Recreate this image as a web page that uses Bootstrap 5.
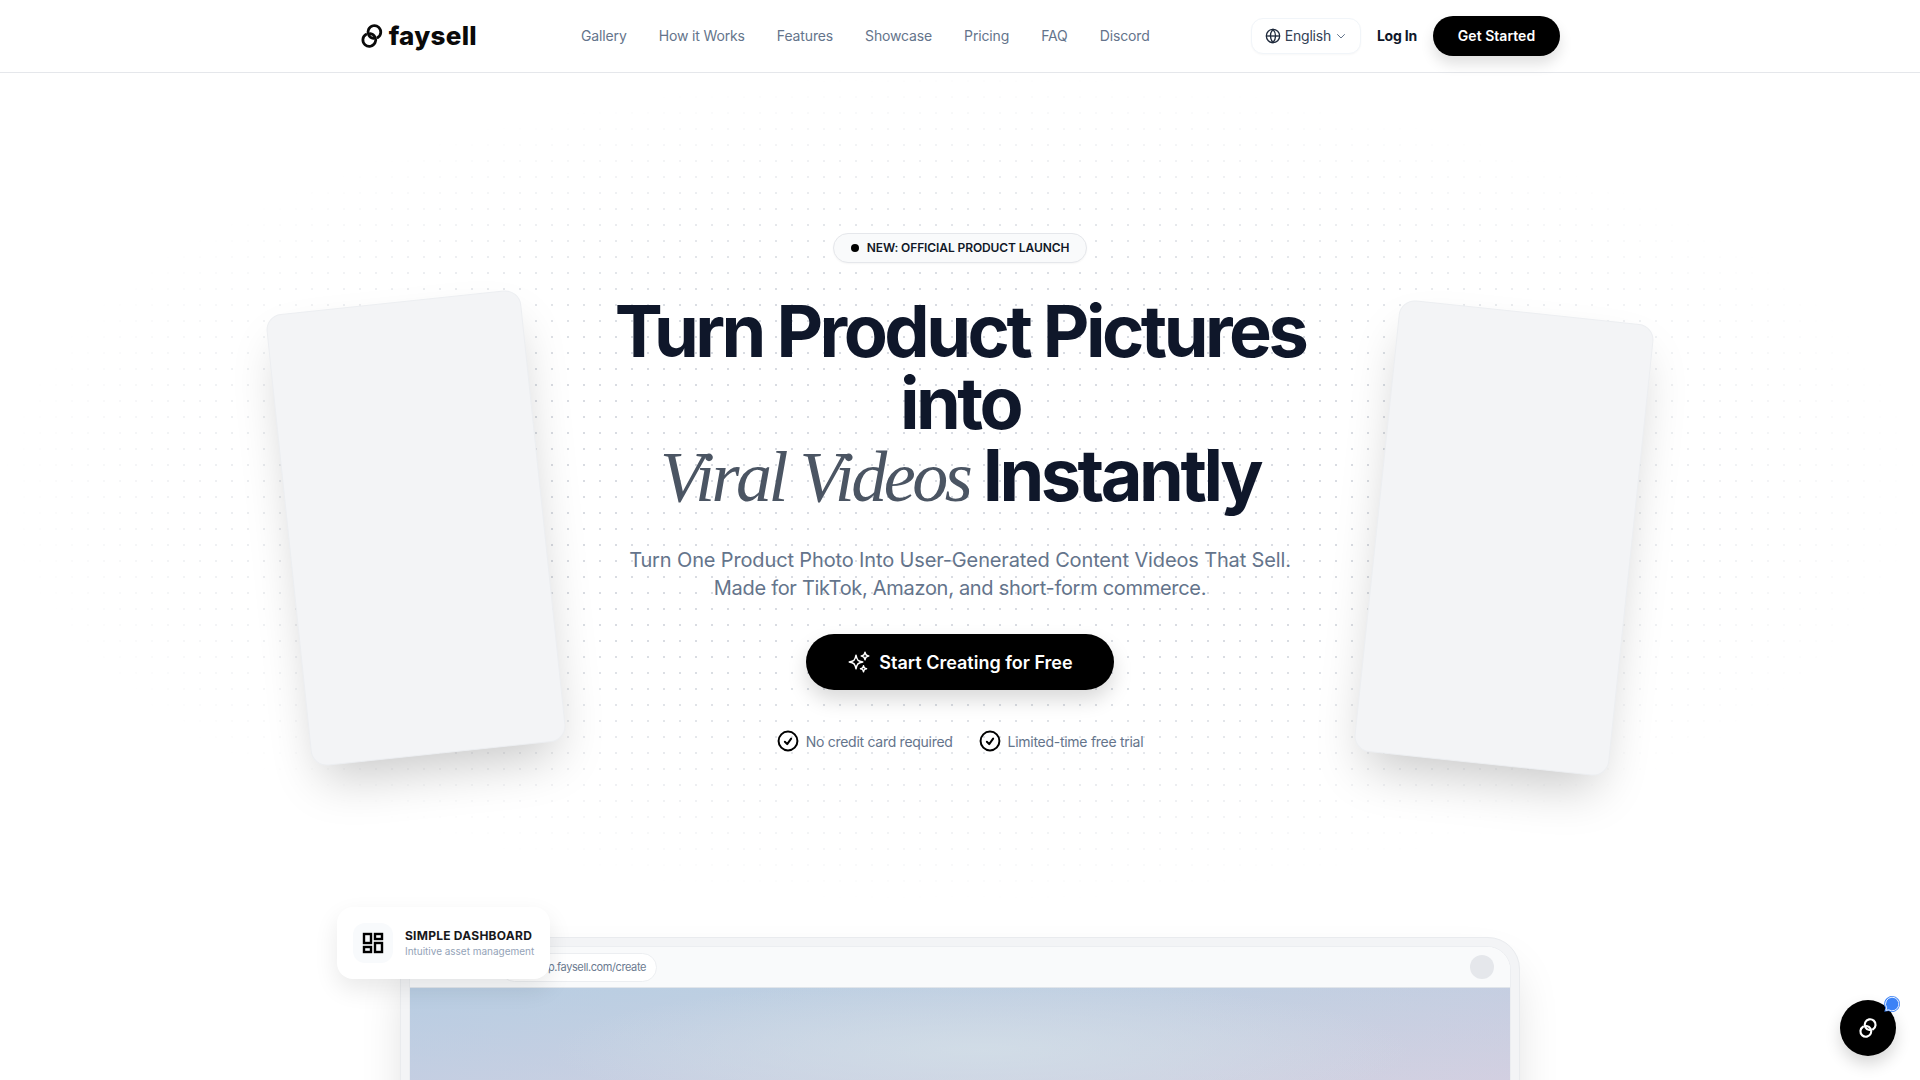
<!doctype html>
<html lang="en">
<head>
<meta charset="utf-8">
<title>faysell</title>
<link href="https://cdn.jsdelivr.net/npm/bootstrap@5.3.0/dist/css/bootstrap.min.css" rel="stylesheet">
<style>
html,body{height:1080px;overflow:hidden;}
body{font-family:Inter,"Liberation Sans",sans-serif;background:#fff;color:#0f172a;}
.top-bar{height:73px;border-bottom:1px solid #e5e7eb;background:#fff;position:relative;z-index:5;}
.top-inner{width:1200px;margin:0 auto;height:72px;}
.brand-logo{width:117px;color:#0a0a0a;text-decoration:none;font-weight:800;font-size:26px;letter-spacing:.3px;gap:5px;}
.brand-logo span{margin-top:-2px;}
.nav-items{margin-left:104px;gap:32px;margin-top:-2px;}
.nav-items a{font-size:14px;color:#64748b;text-decoration:none;letter-spacing:-.14px;}
.lang-btn{height:36px;width:110px;border:1px solid #f1f5f9;border-radius:12px;font-size:14px;color:#334155;background:#fff;letter-spacing:-.2px;box-shadow:0 1px 2px rgba(0,0,0,.03);padding-bottom:2px;}
.login-link{font-size:14px;font-weight:700;color:#0f172a;text-decoration:none;letter-spacing:-.2px;margin:0 16px;padding-bottom:1px;}
.start-btn{width:127px;height:40px;background:#000;color:#fff;border-radius:20px;font-size:14px;font-weight:600;text-decoration:none;letter-spacing:.03px;padding-bottom:1px;box-shadow:0 8px 14px rgba(0,0,0,.12);}
.hero-zone{position:relative;height:1007px;overflow:hidden;}
.dot-field{position:absolute;left:0;right:0;top:0;height:830px;background-image:radial-gradient(circle,#c9ced6 1px,transparent 1.2px);background-size:16px 16px;-webkit-mask-image:radial-gradient(ellipse 50% 50% at 50% 50%,#000 50%,transparent 100%);mask-image:radial-gradient(ellipse 50% 50% at 50% 50%,#000 50%,transparent 100%);opacity:.7;}
.float-panel{position:absolute;width:256px;height:454px;background:#f3f4f6;border:1px solid #eceef1;border-radius:16px;box-shadow:0 25px 50px -12px rgba(0,0,0,.22);}
.panel-left{left:288px;top:228px;transform:rotate(-6deg);}
.panel-right{left:1376px;top:238px;transform:rotate(6deg);}
.hero-copy{position:relative;z-index:2;text-align:center;padding-top:160px;}
.launch-pill{height:30px;width:254px;border:1px solid #e5e7eb;border-radius:15px;background:#f9fafb;font-size:12px;font-weight:600;color:#111827;letter-spacing:-.1px;gap:8px;box-shadow:0 1px 2px rgba(0,0,0,.04);}
.launch-dot{width:8px;height:8px;background:#000;border-radius:50%;}
.hero-title{font-family:Inter,"Liberation Sans",sans-serif;font-size:72px;line-height:72px;font-weight:650;letter-spacing:-3.5px;color:#0f172a;margin:32px 0 0;}
.hero-title em{font-family:"Liberation Serif",serif;font-weight:400;color:#4b5563;letter-spacing:-3.5px;}
.hero-sub{font-size:20px;line-height:28px;color:#64748b;margin:33px 0 0;letter-spacing:-.14px;}
.sub-second{letter-spacing:-.3px;}
.cta-btn{width:308px;height:56px;margin-top:32px;background:#000;color:#fff;border-radius:28px;font-size:18px;font-weight:600;text-decoration:none;gap:8px;letter-spacing:0;box-shadow:0 10px 20px rgba(0,0,0,.15);}
.perk-row{margin-top:40px;gap:26px;font-size:14px;color:#64748b;letter-spacing:-.28px;}
.perk-item{gap:7px;}
.device-frame{position:absolute;left:400px;top:864px;width:1120px;height:400px;padding:8px;background:#f3f4f6;border:1px solid #e9ebee;border-radius:32px;box-shadow:0 25px 50px -12px rgba(0,0,0,.18);z-index:1;}
.device-inner{height:100%;border:1px solid #eceef1;border-radius:24px;overflow:hidden;background:#fff;}
.device-bar{height:41px;background:#f9fafb;padding:0 16px 0 90px;border-bottom:1px solid #e1e5ea;}
.url-pill{width:157px;height:29px;border:1px solid #eceef1;border-radius:15px;background:#fff;font-size:11px;color:#6b7a90;padding-right:10px;letter-spacing:-.4px;}
.bar-circle{width:24px;height:24px;background:#e5e7eb;border-radius:50%;}
.device-view{height:350px;background:radial-gradient(ellipse 430px 70px at 52% 62px,rgba(212,224,232,.75),rgba(212,224,232,0)),linear-gradient(180deg,rgba(183,205,226,.45) 0,rgba(212,208,226,.4) 92px),linear-gradient(98deg,#b9cde2 0,#c3d1e2 35%,#c9d2e2 65%,#d2cfe0 100%);}
.dash-tag{position:absolute;left:337px;top:834px;width:213px;height:72px;background:#fff;border-radius:16px;box-shadow:0 10px 25px rgba(0,0,0,.09);z-index:3;padding:0 16px;gap:12px;}
.dash-icon{width:40px;height:40px;background:#f8fafc;border-radius:12px;}
.dash-title{font-size:12px;font-weight:700;color:#18181b;line-height:16px;letter-spacing:.25px;white-space:nowrap;}
.dash-note{font-size:10px;color:#94a3b8;line-height:14px;letter-spacing:-.02px;white-space:nowrap;}
.chat-launch{position:fixed;left:1840px;top:1000px;width:56px;height:56px;background:#000;border-radius:50%;box-shadow:0 8px 16px rgba(0,0,0,.16);z-index:9;}
.chat-badge{position:absolute;left:44px;top:-4px;}
</style>
</head>
<body>
<header class="top-bar">
  <div class="top-inner d-flex align-items-center">
    <a class="brand-logo d-flex align-items-center" href="#">
      <svg width="24" height="26" viewBox="0 0 24 26" fill="none" stroke="currentColor" stroke-width="2.8" stroke-linecap="round"><path d="M18 14.5A6.5 6.5 0 1 0 13.6 15.4"/><path d="M6 11.5A6.5 6.5 0 1 0 10.4 10.6"/></svg>
      <span>faysell</span>
    </a>
    <nav class="nav-items d-flex">
      <a href="#">Gallery</a><a href="#">How it Works</a><a href="#">Features</a><a href="#">Showcase</a><a href="#">Pricing</a><a href="#">FAQ</a><a href="#">Discord</a>
    </nav>
    <div class="d-flex align-items-center ms-auto me-0">
      <button class="lang-btn d-flex align-items-center justify-content-center gap-1" type="button">
        <svg width="16" height="16" viewBox="0 0 24 24" fill="none" stroke="#1e293b" stroke-width="2"><circle cx="12" cy="12" r="10"/><path d="M2 12h20"/><path d="M12 2a15 15 0 0 1 0 20 15 15 0 0 1 0-20z"/></svg>
        <span>English</span>
        <svg width="12" height="12" viewBox="0 0 24 24" fill="none" stroke="#64748b" stroke-width="2" stroke-linecap="round"><path d="m5 9 7 7 7-7"/></svg>
      </button>
      <a class="login-link" href="#">Log In</a>
      <a class="start-btn d-flex align-items-center justify-content-center" href="#">Get Started</a>
    </div>
  </div>
</header>
<main class="hero-zone">
  <div class="dot-field"></div>
  <div class="float-panel panel-left"></div>
  <div class="float-panel panel-right"></div>
  <section class="hero-copy">
    <div class="launch-pill d-inline-flex align-items-center justify-content-center"><span class="launch-dot"></span>NEW: OFFICIAL PRODUCT LAUNCH</div>
    <h1 class="hero-title">Turn Product Pictures<br>into<br><em>Viral Videos</em> Instantly</h1>
    <p class="hero-sub">Turn One Product Photo Into User-Generated Content Videos That Sell.<br><span class="sub-second">Made for TikTok, Amazon, and short-form commerce.</span></p>
    <a class="cta-btn d-inline-flex align-items-center justify-content-center" href="#">
      <svg width="24" height="24" viewBox="0 0 24 24" fill="none" stroke="#fff" stroke-width="1.5" stroke-linejoin="round"><path d="M9.813 15.904 9 18.75l-.813-2.846a4.5 4.5 0 0 0-3.09-3.09L2.25 12l2.846-.813a4.5 4.5 0 0 0 3.09-3.09L9 5.25l.813 2.846a4.5 4.5 0 0 0 3.09 3.09L15.75 12l-2.846.813a4.5 4.5 0 0 0-3.09 3.09ZM18.259 8.715 18 9.75l-.259-1.035a3.375 3.375 0 0 0-2.455-2.456L14.25 6l1.036-.259a3.375 3.375 0 0 0 2.455-2.456L18 2.25l.259 1.035a3.375 3.375 0 0 0 2.456 2.456L21.75 6l-1.035.259a3.375 3.375 0 0 0-2.456 2.456ZM16.894 20.567 16.5 21.75l-.394-1.183a2.25 2.25 0 0 0-1.423-1.423L13.5 18.75l1.183-.394a2.25 2.25 0 0 0 1.423-1.423l.394-1.183.394 1.183a2.25 2.25 0 0 0 1.423 1.423l1.183.394-1.183.394a2.25 2.25 0 0 0-1.423 1.423Z"/></svg>
      <span>Start Creating for Free</span>
    </a>
    <div class="perk-row d-flex justify-content-center align-items-center">
      <span class="perk-item d-flex align-items-center"><svg width="22" height="22" viewBox="1.5 1.5 21 21" fill="none" stroke="#000" stroke-width="1.9" stroke-linecap="round" stroke-linejoin="round"><path d="M9 12.75 11.25 15 15 9.75M21 12a9 9 0 1 1-18 0 9 9 0 0 1 18 0Z"/></svg>No credit card required</span>
      <span class="perk-item d-flex align-items-center"><svg width="22" height="22" viewBox="1.5 1.5 21 21" fill="none" stroke="#000" stroke-width="1.9" stroke-linecap="round" stroke-linejoin="round"><path d="M9 12.75 11.25 15 15 9.75M21 12a9 9 0 1 1-18 0 9 9 0 0 1 18 0Z"/></svg>Limited-time free trial</span>
    </div>
  </section>
  <div class="dash-tag d-flex align-items-center">
    <div class="dash-icon d-flex align-items-center justify-content-center flex-shrink-0">
      <svg width="24" height="24" viewBox="0 0 24 24" fill="none" stroke="#000" stroke-width="2.4"><rect x="3" y="3" width="7" height="9"/><rect x="14" y="3" width="7" height="5"/><rect x="14" y="12" width="7" height="9"/><rect x="3" y="16" width="7" height="5"/></svg>
    </div>
    <div>
      <div class="dash-title">SIMPLE DASHBOARD</div>
      <div class="dash-note">Intuitive asset management</div>
    </div>
  </div>
  <div class="device-frame">
    <div class="device-inner">
      <div class="device-bar d-flex align-items-center justify-content-between">
        <div class="url-pill d-flex align-items-center justify-content-end">app.faysell.com/create</div>
        <div class="bar-circle"></div>
      </div>
      <div class="device-view"></div>
    </div>
  </div>
</main>
<a class="chat-launch d-flex align-items-center justify-content-center" href="#" aria-label="Chat">
  <svg width="20" height="22" viewBox="0 0 24 26" fill="none" stroke="#fff" stroke-width="2.6" stroke-linecap="round"><path d="M18 14.5A6.5 6.5 0 1 0 13.6 15.4"/><path d="M6 11.5A6.5 6.5 0 1 0 10.4 10.6"/></svg>
  <svg class="chat-badge" width="16" height="16" viewBox="0 0 16 16"><path d="M8 0a8 8 0 1 1-3.6 15.1L.3 15.7l1-3.6A8 8 0 0 1 8 0z" fill="#3b82f6"/><path d="M8 1.2a6.8 6.8 0 1 1-3.3 12.7l-2.8.4.7-2.6A6.8 6.8 0 0 1 8 1.2z" fill="#3b82f6" stroke="#fff" stroke-width=".9"/></svg>
</a>
<script src="https://cdn.jsdelivr.net/npm/bootstrap@5.3.0/dist/js/bootstrap.bundle.min.js"></script>
</body>
</html>
